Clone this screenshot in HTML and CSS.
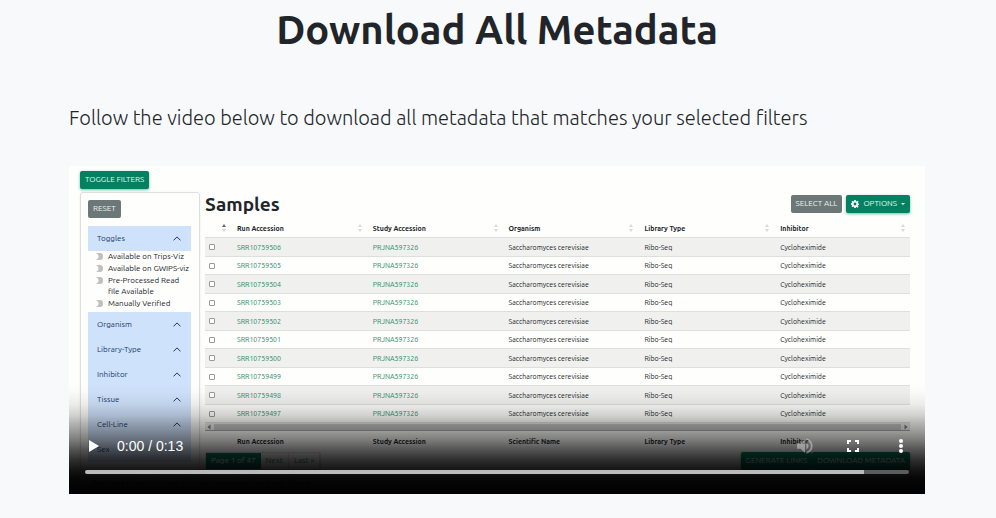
FILE: index.html
```html
<!DOCTYPE html>
<html lang="en">
<head>
<meta charset="utf-8">
<title>Download All Metadata</title>
<link rel="stylesheet" href="styles.css">
</head>
<body>
<main class="page">
  <h1 class="title">Download All Metadata</h1>
  <p class="lead">Follow the video below to download all metadata that matches your selected filters</p>
  <section class="player" aria-label="Video">
    <div class="frame">
      <button class="btn btn-green" type="button">TOGGLE FILTERS</button>
      <div class="columns">
        <aside class="filters">
          <button class="btn btn-grey" type="button">RESET</button>
          <div class="accordion" id="accordion">
            <button class="acc-head" type="button">Toggles <svg class="chev" viewBox="0 0 8 5"><path d="M.5 4.4 4 .9l3.5 3.5"/></svg></button>
            <div class="switches">
              <label class="switch"><input type="checkbox"><span>Available on Trips-Viz</span></label>
              <label class="switch"><input type="checkbox"><span>Available on GWIPS-viz</span></label>
              <label class="switch"><input type="checkbox"><span>Pre-Processed Read file Available</span></label>
              <label class="switch"><input type="checkbox"><span>Manually Verified</span></label>
            </div>
          </div>
        </aside>
        <div class="samples">
          <div class="samples-head">
            <h2 class="samples-title">Samples</h2>
            <div class="actions">
              <button class="btn btn-grey" type="button">SELECT ALL</button>
              <button class="btn btn-green" type="button"><svg class="gear" viewBox="0 0 16 16"><path fill-rule="evenodd" d="M6.6 0h2.8l.4 2.2 1.3.6 1.9-1.3 2 2-1.3 1.9.5 1.2 2.3.4v2.8l-2.3.4-.5 1.2 1.3 1.9-2 2-1.9-1.3-1.3.6L9.400 16H6.600l-.4-2.200-1.300-.6L3 14.500l-2-2 1.300-1.900-.5-1.200L0 9.400V6.600l1.800-.4.5-1.200L1 3.500l2-2 1.900 1.300 1.300-.6zM8 5.200a2.800 2.800 0 1 0 0 5.600 2.800 2.800 0 0 0 0-5.600z"/></svg>OPTIONS<svg class="caret" viewBox="0 0 4 2"><path d="M0 0h4L2 2z"/></svg></button>
            </div>
          </div>
          <table class="grid">
            <thead><tr id="head"></tr></thead>
            <tbody id="rows"></tbody>
          </table>
          <div class="hscroll"><svg viewBox="0 0 4 6"><path d="M3.500.5v5L.5 3z"/></svg><span class="thumb"></span><svg viewBox="0 0 4 6"><path d="M.5.5v5l3-2.500z"/></svg></div>
          <div class="names"><b></b><b>Run Accession</b><b>Study Accession</b><b>Scientific Name</b><b>Library Type</b><b>Inhibitor</b></div>
          <div class="foot">
            <nav class="pages"><span class="current">Page 1 of 47</span><a href="#next">Next</a><a href="#last">Last »</a></nav>
            <div class="downloads"><button class="btn btn-green" type="button">GENERATE LINKS</button><button class="btn btn-green" type="button">DOWNLOAD METADATA</button></div>
          </div>
        </div>
      </div>
      <p class="note">For more information on the columns shown here see: Above</p>
    </div>
    <div class="controls">
      <div class="control-row">
        <button class="ctl play" type="button" aria-label="Play"><svg viewBox="0 0 10 12"><path d="M0 0l10 6-10 6z"/></svg></button>
        <span class="time">0:00 / 0:13</span>
        <button class="ctl mute" type="button" aria-label="Mute"><svg viewBox="0 0 18 18"><path d="M0 6v6h4l5 5V1L4 6zm13 3a4.500 4.500 0 0 0-2.500-4v8A4.500 4.500 0 0 0 13 9zM10.500.2v2.100a7 7 0 0 1 0 13.400v2.100a9 9 0 0 0 0-17.600z"/></svg></button>
        <button class="ctl full" type="button" aria-label="Full screen"><svg viewBox="0 0 12 12"><path d="M0 0h4v2H2v2H0zm8 0h4v4h-2V2H8zM0 8h2v2h2v2H0zm10 0h2v4H8v-2h2z"/></svg></button>
        <button class="ctl more" type="button" aria-label="More options"><svg viewBox="0 0 4 14"><circle cx="2" cy="2" r="2"/><circle cx="2" cy="7" r="2"/><circle cx="2" cy="12" r="2"/></svg></button>
      </div>
      <input class="seek" type="range" min="0" max="13" value="0" aria-label="Seek">
    </div>
  </section>
</main>
<script src="script.js"></script>
</body>
</html>
```
FILE: styles.css
```css
* { box-sizing: border-box; }
body {
  margin: 0;
  background: #f8f9fb;
  color: #212529;
  font-family: Ubuntu, "Noto Sans", sans-serif;
}
.page { padding: 6px 71px 24px 69px; }
.title {
  margin: 0;
  font-size: 40px;
  line-height: 48px;
  font-weight: 600;
  text-align: center;
}
.lead {
  margin: 48px 0 32px;
  font-family: Ubuntu, "Open Sans", sans-serif;
  font-size: 20px;
  line-height: 32px;
  font-weight: 300;
}
button { font-family: inherit; cursor: pointer; }
.player { position: relative; background: #fefefd; }
.frame {
  padding: 5px 15px 0 11px;
  height: 328px;
  overflow: hidden;
  font-size: 7px;
  line-height: 12px;
}
.btn {
  display: inline-flex;
  align-items: center;
  justify-content: center;
  height: 18px;
  padding: 0 5px;
  border: 0;
  border-radius: 2px;
  color: #e9f3ef;
  font-size: 8px;
  line-height: 12px;
  white-space: nowrap;
}
.btn-green { background: #058060; box-shadow: 0 1px 3px #05806088; }
.btn-grey { background: #6c7778; }
.columns { display: flex; gap: 5px; margin-top: 3px; align-items: flex-start; }
.filters {
  flex: 0 0 120px;
  padding: 7px 8px 8px 7px;
  border: 1px solid #dededd;
  border-radius: 3px;
  box-shadow: 0 1px 3px #0001;
}
.accordion { margin-top: 8px; }
.acc-head {
  display: flex;
  align-items: center;
  justify-content: space-between;
  width: 100%;
  height: 25px;
  padding: 0 10px 0 9px;
  border: 0;
  background: #cfe2fb;
  color: #173b6b;
  font-size: 8px;
}
.chev { width: 8px; height: 5px; fill: none; stroke: #173b6b; stroke-width: 1; }
.switches { display: flex; flex-direction: column; height: 61px; }
.switch { display: flex; gap: 5px; padding-left: 6px; font-size: 8px; line-height: 11px; margin-bottom: 1px; white-space: nowrap; }
.switch span { max-width: 84px; }
.switch:nth-child(3) span { white-space: normal; max-width: 76px; }
.switch input {
  appearance: none;
  flex: none;
  width: 9px;
  height: 7px;
  margin: 2px 0;
  border-radius: 3px;
  background: radial-gradient(circle at 1px 50%, #fefefd 3px, #bfbfbf 4px);
}
.samples { flex: 1; min-width: 0; }
.samples-head { display: flex; justify-content: space-between; height: 27px; }
.samples-title { margin: 0; font-size: 19px; line-height: 24px; font-weight: 600; }
.actions { display: flex; gap: 4px; padding-top: 3px; }
.gear { width: 8px; height: 8px; margin-right: 4px; fill: #fff; }
.caret { width: 4px; height: 2px; margin-left: 4px; fill: #fff; }
.grid { width: 100%; table-layout: fixed; border-collapse: separate; border-spacing: 0; }
.grid th, .grid td {
  padding: 0 0 0 6px;
  text-align: left;
  line-height: 17px;
  white-space: nowrap;
  border-bottom: 1px solid #dededd;
}
.grid th { padding-right: 5px; line-height: 18px; font-weight: 700; }
.grid th:first-child { width: 26px; }
.grid td:first-child { padding-left: 4px; line-height: 0; }
.grid th div { display: flex; align-items: center; justify-content: space-between; }
.grid th:first-child div { justify-content: flex-end; }
.grid tbody tr { height: 19px; }
.grid tbody tr:nth-child(even) { height: 18px; }
.grid tbody tr:nth-child(odd) { background: #f0f0ef; }
.grid a { color: #1d8a67; text-decoration: none; }
.grid input {
  appearance: none;
  width: 6px;
  height: 6px;
  margin: 0;
  border: 1px solid #999;
  border-radius: 1px;
  background: #fff;
}
.sort { width: 4px; height: 8px; fill: #dadada; }
.sort .on { fill: #666; }
.hscroll {
  display: flex;
  align-items: center;
  gap: 3px;
  height: 7px;
  padding: 0 2px;
  background: #e8e8e8;
}
.hscroll svg { width: 4px; height: 6px; fill: #777; }
.thumb { flex: 1; height: 6px; background: #c4c4c4; }
.names {
  display: grid;
  grid-template-columns: 26px repeat(5, 1fr);
  border-top: 1px solid #a8a8a8;
  line-height: 21px;
}
.names b { padding-left: 6px; }
.foot { display: flex; justify-content: space-between; align-items: flex-start; }
.pages { display: flex; line-height: 16px; font-size: 8px; border: 1px solid #dededd; border-radius: 2px; }
.pages a { padding: 0 5px; color: #1d8a67; text-decoration: none; border-right: 1px solid #dededd; }
.pages .current { padding: 0 5px; background: #058060; color: #fff; }
.downloads { display: flex; }
.note { margin: 6px 0 0 12px; font-size: 8px; }
.controls {
  position: absolute;
  inset: auto 0 0 0;
  height: 110px;
  padding: 50px 16px 0;
  background: linear-gradient(#0000 0, #00000004 8px, #00000012 20px, #0000002c 31px, #0000004a 39px, #00000064 47px, #00000087 57px, #000000ad 66px, #000000d1 76px, #000000eb 86px, #000000f8 94px, #000 108px);
}
.control-row { display: flex; align-items: center; height: 24px; padding: 0 6px 0 4px; }
.ctl { display: flex; padding: 0; border: 0; background: none; }
.ctl svg { fill: #fff; }
.play svg { width: 10px; height: 12px; }
.time { margin-left: 18px; color: #fff; font: 14px/24px "Liberation Sans", sans-serif; }
.mute { margin-left: auto; }
.mute svg { width: 16px; height: 16px; fill: #ffffff60; }
.full { margin-left: 34px; }
.full svg { width: 12px; height: 12px; }
.more { margin-left: 40px; }
.more svg { width: 4px; height: 14px; }
.seek {
  appearance: none;
  display: block;
  width: 100%;
  height: 4px;
  margin: 12px 0 0;
  border-radius: 2px;
  background: linear-gradient(90deg, #bababa 94.5%, #5c5c5c 94.5%);
}
.seek::-webkit-slider-thumb { appearance: none; width: 0; height: 0; }
```
FILE: script.js
```js
const sortIcon = on => `<svg class="sort" viewBox="0 0 4 8"><path class="${on ? 'on' : ''}" d="M0 3h4L2 0z"/><path d="M0 5h4L2 8z"/></svg>`;
const heads = ['', 'Run Accession', 'Study Accession', 'Organism', 'Library Type', 'Inhibitor'];
document.getElementById('head').innerHTML = heads
  .map((h, i) => `<th><div>${h ? `<span>${h}</span>` : ''}${sortIcon(i === 0)}</div></th>`).join('');

const runs = [506, 505, 504, 503, 502, 501, 500, 499, 498, 497];
document.getElementById('rows').innerHTML = runs.map(n => `<tr>
  <td><input type="checkbox" aria-label="Select SRR10759${n}"></td>
  <td><a href="#run">SRR10759${n}</a></td>
  <td><a href="#study">PRJNA597326</a></td>
  <td>Saccharomyces cerevisiae</td><td>Ribo-Seq</td><td>Cycloheximide</td></tr>`).join('');

const sections = ['Organism', 'Library-Type', 'Inhibitor', 'Tissue', 'Cell-Line', 'Sex'];
document.getElementById('accordion').insertAdjacentHTML('beforeend', sections.map(s =>
  `<button class="acc-head" type="button">${s} <svg class="chev" viewBox="0 0 8 5"><path d="M.5 4.4 4 .9l3.5 3.5"/></svg></button>`).join(''));
```
